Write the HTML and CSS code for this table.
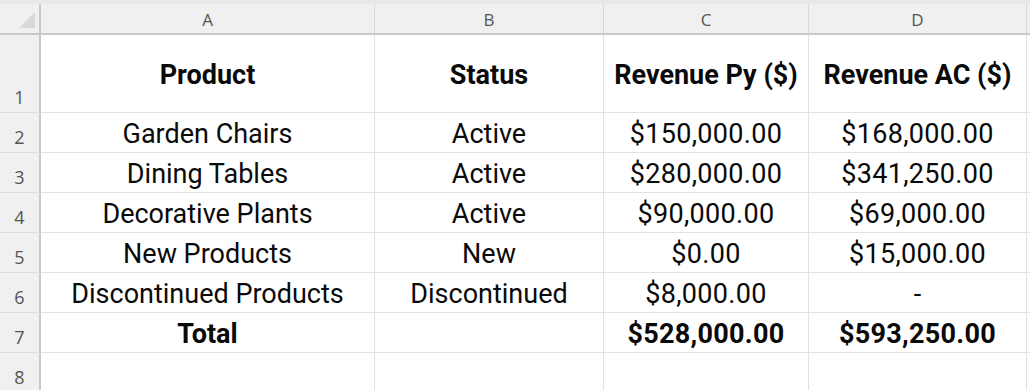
FILE: index.html
```html
<!DOCTYPE html>
<html>
<head>
<meta charset="utf-8">
<link rel="stylesheet" href="styles.css">
</head>
<body>
<div class="topstrip"></div>
<div class="sheet">
  <div class="corner"><span class="tri"></span></div>
  <div class="colhead">A</div>
  <div class="colhead">B</div>
  <div class="colhead">C</div>
  <div class="colhead">D</div>
  <div class="colhead end"></div>

  <div class="rowhead r1">1</div>
  <div class="cell r1 bold">Product</div>
  <div class="cell r1 bold">Status</div>
  <div class="cell r1 bold">Revenue Py ($)</div>
  <div class="cell r1 bold">Revenue AC ($)</div>
  <div class="cell r1 end"></div>

  <div class="rowhead">2</div>
  <div class="cell">Garden Chairs</div>
  <div class="cell">Active</div>
  <div class="cell num">$150,000.00</div>
  <div class="cell num">$168,000.00</div>
  <div class="cell end"></div>

  <div class="rowhead">3</div>
  <div class="cell">Dining Tables</div>
  <div class="cell">Active</div>
  <div class="cell num">$280,000.00</div>
  <div class="cell num">$341,250.00</div>
  <div class="cell end"></div>

  <div class="rowhead">4</div>
  <div class="cell">Decorative Plants</div>
  <div class="cell">Active</div>
  <div class="cell num">$90,000.00</div>
  <div class="cell num">$69,000.00</div>
  <div class="cell end"></div>

  <div class="rowhead">5</div>
  <div class="cell">New Products</div>
  <div class="cell">New</div>
  <div class="cell num">$0.00</div>
  <div class="cell num">$15,000.00</div>
  <div class="cell end"></div>

  <div class="rowhead">6</div>
  <div class="cell">Discontinued Products</div>
  <div class="cell">Discontinued</div>
  <div class="cell num">$8,000.00</div>
  <div class="cell">-</div>
  <div class="cell end"></div>

  <div class="rowhead">7</div>
  <div class="cell bold">Total</div>
  <div class="cell"></div>
  <div class="cell bold num">$528,000.00</div>
  <div class="cell bold num">$593,250.00</div>
  <div class="cell end"></div>

  <div class="rowhead">8</div>
  <div class="cell"></div>
  <div class="cell"></div>
  <div class="cell"></div>
  <div class="cell"></div>
  <div class="cell end"></div>
</div>
</body>
</html>
```
FILE: styles.css
```css
html, body {
  margin: 0;
  padding: 0;
  background: #ffffff;
  overflow: hidden;
}
body {
  font-family: "Roboto", "Liberation Sans", sans-serif;
  color: #111111;
}
.topstrip {
  height: 4px;
  background: #e6e8eb;
}
.sheet {
  display: grid;
  grid-template-columns: 41px 334px 229px 205px 218px 1fr;
  grid-template-rows: 31px 78px repeat(6, 40px) 40px;
}
.corner {
  background: #f0f0f0;
  border-right: 2px solid #c9c9c9;
  border-bottom: 2px solid #c9c9c9;
  box-sizing: border-box;
  display: flex;
  justify-content: flex-end;
  align-items: flex-end;
  padding: 0 4px 5px 0;
}
.tri {
  width: 0;
  height: 0;
  border-left: 16px solid transparent;
  border-bottom: 16px solid #d8d8d8;
}
.colhead {
  background: #f0f0f0;
  border-right: 1px solid #d9d9d9;
  border-bottom: 2px solid #c9c9c9;
  box-sizing: border-box;
  display: flex;
  align-items: center;
  justify-content: center;
  font-family: "Open Sans", "Liberation Sans", sans-serif;
  font-size: 17px;
  color: #555555;
  padding-top: 2px;
}
.rowhead {
  background: #f0f0f0;
  border-right: 2px solid #c9c9c9;
  border-bottom: 1px solid #dcdcdc;
  box-sizing: border-box;
  display: flex;
  align-items: flex-end;
  justify-content: center;
  font-family: "Open Sans", "Liberation Sans", sans-serif;
  font-size: 18px;
  color: #555555;
  padding-bottom: 3px;
}
.cell {
  border-right: 1px solid #e1e1e1;
  border-bottom: 1px solid #e1e1e1;
  box-sizing: border-box;
  display: flex;
  align-items: center;
  justify-content: center;
  font-size: 27px;
  line-height: 1;
  white-space: nowrap;
  padding-top: 4px;
  color: #0a0a0a;
}
.num {
  letter-spacing: 0.3px;
}
.cell.end, .colhead.end {
  border-right: none;
}
.bold {
  font-weight: 700;
}
```
